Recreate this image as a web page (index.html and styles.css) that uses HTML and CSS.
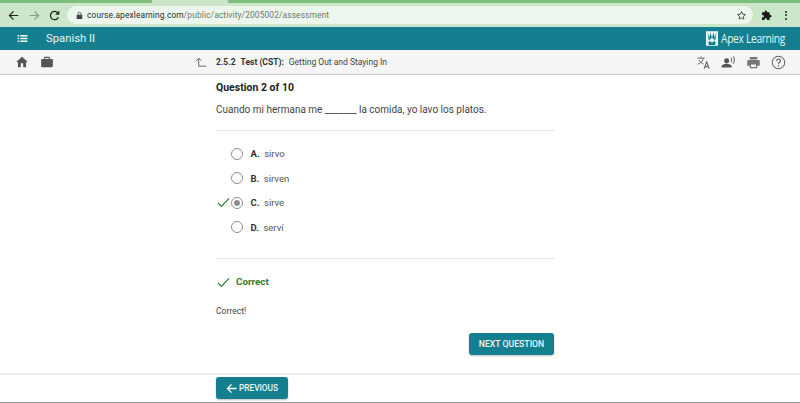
FILE: index.html
```html
<!DOCTYPE html>
<html lang="es">
<head>
<meta charset="utf-8">
<title>Spanish II</title>
<link rel="stylesheet" href="styles.css">
</head>
<body>
<div class="page">
  <div class="tabstrip"><div class="tab"></div></div>
  <div class="toolbar">
    <svg class="ico nav-back" viewBox="0 0 16 16"><path d="M15 8H2M8 2 2 8l6 6" fill="none" stroke="#222" stroke-width="1.800"/></svg>
    <svg class="ico nav-fwd" viewBox="0 0 16 16"><path d="M1 8h13M8 2l6 6-6 6" fill="none" stroke="#8a9c89" stroke-width="1.800"/></svg>
    <svg class="ico nav-reload" viewBox="0 0 16 16"><path d="M13.600 10.500A6 6 0 1 1 13 4.700" fill="none" stroke="#222" stroke-width="1.800"/><path d="M15 1v6H9z" fill="#222"/></svg>
    <div class="urlbar">
      <svg class="lock" viewBox="0 0 10 12"><path d="M1 5h8v6H1z" fill="#444"/><path d="M3 5V3.400a2 2 0 0 1 4 0V5" fill="none" stroke="#444" stroke-width="1.200"/></svg>
      <span class="url"><span class="url-host">course.apexlearning.com</span>/public/activity/2005002/assessment</span>
      <svg class="star" viewBox="0 0 24 24"><path d="m12 3.500 2.600 5.600 6 .7-4.500 4.100 1.200 6-5.300-3-5.300 3 1.200-6-4.500-4.100 6-.7z" fill="none" stroke="#333" stroke-width="1.800"/></svg>
    </div>
    <svg class="puzzle" viewBox="0 0 24 24"><path d="M20.500 11H19V7a2 2 0 0 0-2-2h-4V3.500a2.500 2.500 0 0 0-5 0V5H4a2 2 0 0 0-2 2v3.800h1.500a2.700 2.700 0 0 1 0 5.400H2V20a2 2 0 0 0 2 2h3.800v-1.500a2.700 2.700 0 0 1 5.400 0V22H17a2 2 0 0 0 2-2v-4h1.500a2.500 2.500 0 0 0 0-5z" fill="#1b1b1b"/></svg>
    <div class="kebab"><i></i><i></i><i></i></div>
  </div>
  <header class="appbar">
    <svg class="menu-ico" viewBox="0 0 24 24"><path d="M3 5.500h3v3H3zM3 10.500h3v3H3zM3 15.500h3v3H3zM8 5.500h13v3H8zM8 10.500h13v3H8zM8 15.500h13v3H8z" fill="#fff"/></svg>
    <span class="course">Spanish II</span>
    <div class="brand">
      <svg class="brand-mark" viewBox="0 0 14 17"><path d="M0 0h14v17H0z" fill="#e9f4f5"/><path d="M2 1.500l2 6 1.200-6 1.800 6 1.800-6L10 7.500l2-6-1 8.500H9.500L7 7 4.500 10H3zM3.500 16a3.800 3.800 0 0 1 .9-5l1.300 1.500a2 2 0 0 0 2.600 0l1.300-1.500a3.800 3.800 0 0 1 .9 5z" fill="#14808f"/></svg>
      <span class="brand-name">Apex Learning</span>
    </div>
  </header>
  <nav class="subbar">
    <div class="sub-left">
      <svg class="tool" viewBox="0 0 24 24"><path d="M10 21v-7h4v7h5v-9h3L12 3 2 12h3v9z" fill="#555"/></svg>
      <svg class="tool" viewBox="0 0 24 24"><path d="M9 3h6a2 2 0 0 1 2 2v2h4a1 1 0 0 1 1 1v11a2 2 0 0 1-2 2H4a2 2 0 0 1-2-2V8a1 1 0 0 1 1-1h4V5a2 2 0 0 1 2-2zm0 4h6V5H9z" fill="#555" fill-rule="evenodd"/></svg>
    </div>
    <div class="crumb">
      <svg class="up-ico" viewBox="0 0 16 16"><path d="M5 14V3M1.500 6.500 5 3l3.500 3.500M5 13.500h10" fill="none" stroke="#666" stroke-width="1.300"/></svg>
      <span class="crumb-text"><b>2.5.2</b><b class="crumb-type">Test (CST):</b>Getting Out and Staying In</span>
    </div>
    <div class="sub-right">
      <svg class="tool" viewBox="0 0 24 24"><path d="M2 5h12M8 2.500V5M12 5c-1 4-4.500 8-9.500 10M5 8c1.500 3 4 5.500 7 6.500" fill="none" stroke="#666" stroke-width="1.500"/><path d="m13 22 4-11 4 11M14.300 18.500h5.400" fill="none" stroke="#666" stroke-width="1.800"/></svg>
      <svg class="tool" viewBox="0 0 24 24"><circle cx="9" cy="9" r="4" fill="#555"/><path d="M1 20v-2c0-2.500 5-4 8-4s8 1.500 8 4v2z" fill="#555"/><path d="M16 4c1.500 1.500 1.500 6 0 8M19.500 2c2.500 3 2.500 9 0 12" fill="none" stroke="#555" stroke-width="1.500"/></svg>
      <svg class="tool" viewBox="0 0 24 24"><path d="M6 3h12v4H6zM4 8h16a2 2 0 0 1 2 2v7h-4v4H6v-4H2v-7a2 2 0 0 1 2-2zm4 7v4h8v-4z" fill="#777" fill-rule="evenodd"/></svg>
      <svg class="tool" viewBox="0 0 24 24"><circle cx="12" cy="12" r="10" fill="none" stroke="#555" stroke-width="1.600"/><path d="M9 9.500a3 3 0 1 1 4.700 2.500c-1.200.8-1.700 1.400-1.700 2.800" fill="none" stroke="#555" stroke-width="1.700"/><circle cx="12" cy="17.500" r="1.100" fill="#555"/></svg>
    </div>
  </nav>
  <main class="content">
    <h1 class="q-title">Question 2 of 10</h1>
    <p class="q-text">Cuando mi hermana me _______ la comida, yo lavo los platos.</p>
    <hr class="rule rule-top">
    <ul class="options">
      <li class="option"><span class="mark"></span><span class="radio"></span><b class="letter">A.</b><span>sirvo</span></li>
      <li class="option"><span class="mark"></span><span class="radio"></span><b class="letter">B.</b><span>sirven</span></li>
      <li class="option"><span class="mark"><svg class="check" viewBox="0 0 14 12"><path d="m1 6.500 3.800 3.800L13 1.500" fill="none" stroke="#2e7d32" stroke-width="1.300"/></svg></span><span class="radio radio-on"></span><b class="letter">C.</b><span>sirve</span></li>
      <li class="option"><span class="mark"></span><span class="radio"></span><b class="letter">D.</b><span>serví</span></li>
    </ul>
    <hr class="rule rule-bottom">
    <div class="verdict"><svg class="check" viewBox="0 0 14 12"><path d="m1 6.500 3.800 3.800L13 1.500" fill="none" stroke="#2e7d32" stroke-width="1.300"/></svg><span>Correct</span></div>
    <p class="feedback">Correct!</p>
    <div class="next-row"><button class="btn btn-next" type="button">NEXT QUESTION</button></div>
  </main>
  <footer class="footer">
    <button class="btn btn-prev" type="button"><svg class="prev-arrow" viewBox="0 0 12 12"><path d="M11.500 6H1.500M6 1.500 1.500 6 6 10.500" fill="none" stroke="#fff" stroke-width="1.400"/></svg>PREVIOUS</button>
  </footer>
</div>
</body>
</html>
```
FILE: styles.css
```css
* { box-sizing: border-box; }
html, body { margin: 0; padding: 0; background: #fff; }
body { font-family: Roboto, "Liberation Sans", sans-serif; color: #333; overflow: hidden; }
.page { width: 800px; height: 403px; display: flex; flex-direction: column; }

.tabstrip { height: 3px; background: #7fbf7e; padding-left: 152px; flex: none; }
.tab { width: 76px; height: 3px; background: #cbe6c8; }
.toolbar { height: 24px; background: #cbe6c8; display: flex; align-items: center; flex: none; }
.ico { width: 11px; height: 11px; flex: none; }
.nav-back { margin-left: 8px; }
.nav-fwd { margin-left: 10px; }
.nav-reload { margin-left: 9px; }
.urlbar { margin-left: 7px; width: 686px; height: 18px; border-radius: 9px; background: #edf6ec; display: flex; align-items: center; padding-left: 9px; padding-right: 6px; }
.lock { width: 7px; height: 9px; flex: none; }
.url { margin-left: 4px; font-size: 8.400px; color: #6d766d; letter-spacing: .12px; flex: 1; white-space: nowrap; }
.url-host { color: #2c2f2c; }
.star { width: 11px; height: 11px; flex: none; }
.puzzle { width: 11px; height: 11px; margin-left: 8px; flex: none; }
.kebab { margin-left: 13px; display: flex; flex-direction: column; gap: 1.500px; flex: none; }
.kebab i { display: block; width: 2px; height: 2px; background: #222; border-radius: 50%; }

.appbar { height: 23px; background: #14808f; display: flex; align-items: center; color: #fff; flex: none; padding-left: 16px; padding-right: 15px; }
.menu-ico { width: 13px; height: 13px; flex: none; }
.course { margin-left: 17px; font-size: 11.300px; color: #e6f3f4; }
.brand { margin-left: auto; display: flex; align-items: center; gap: 3px; }
.brand-mark { width: 12px; height: 15px; }
.brand-name { font-family: "Open Sans", sans-serif; font-size: 12px; letter-spacing: -.35px; transform: scaleX(.85); transform-origin: left; width: 64px; white-space: nowrap; color: #e6f3f4; }

.subbar { height: 25px; background: #f5f5f5; border-bottom: 1px solid #c9c9c9; display: flex; align-items: center; flex: none; padding-left: 15px; padding-right: 14px; }
.sub-left { display: flex; align-items: center; gap: 11px; width: 180px; }
.sub-left .tool { width: 14px; height: 14px; }
.crumb { display: flex; align-items: center; }
.up-ico { width: 12px; height: 12px; }
.crumb-text { margin-left: 9px; font-size: 8.500px; color: #444; white-space: nowrap; }
.crumb-text b { color: #333; font-weight: 700; }
.crumb-type { margin: 0 5px; }
.sub-right { margin-left: auto; display: flex; align-items: center; gap: 10px; }
.sub-right .tool { width: 15px; height: 15px; }

.content { width: 338px; margin-left: 216px; flex: 1; min-height: 0; padding-top: 6px; }
.q-title { margin: 0; font-size: 10.400px; line-height: 13px; font-weight: 700; color: #222; letter-spacing: .05px; }
.q-text { margin: 9px 0 0; font-size: 10px; line-height: 14px; color: #444; }
.rule { border: 0; height: 1px; background: #e5e5e5; margin: 0; }
.rule-top { margin-top: 13px; }
.options { list-style: none; margin: 10.500px 0 0; padding: 0; }
.option { height: 24.500px; display: flex; align-items: center; font-size: 9.500px; color: #555; }
.mark { width: 15px; display: flex; align-items: center; flex: none; }
.mark .check { margin-left: 1px; }
.radio { width: 12px; height: 12px; border: 1px solid #8f8f8f; border-radius: 50%; background: #fff; flex: none; }
.radio-on { display: flex; align-items: center; justify-content: center; }
.radio-on::after { content: ""; width: 6px; height: 6px; border-radius: 50%; background: #8f8f8f; }
.letter { margin-left: 7.500px; margin-right: 4.500px; color: #333; }
.rule-bottom { margin-top: 18.500px; }
.check { width: 13px; height: 11px; flex: none; }
.verdict { margin-top: 17px; display: flex; align-items: center; gap: 6px; font-size: 9.800px; font-weight: 700; color: #2e7d32; line-height: 12px; padding-left: 1px; }
.feedback { margin: 18px 0 0; font-size: 8.600px; line-height: 11px; color: #444; }
.next-row { display: flex; justify-content: flex-end; margin-top: 16px; }
.btn { border: 0; background: #14808f; color: #eef6f7; font-family: Roboto, "Liberation Sans", sans-serif; font-weight: 500; border-radius: 3px; box-shadow: 0 1px 2px rgba(0,0,0,.25); padding: 0; }
.btn-next { width: 85px; height: 21.500px; font-size: 8.700px; }

.footer { height: 30px; flex: none; border-top: 2px solid #eee; border-bottom: 1px solid #999; padding-left: 216px; padding-top: 2px; display: flex; align-items: flex-start; }
.btn-prev { width: 72px; height: 22px; font-size: 8.300px; display: flex; align-items: center; justify-content: center; gap: 2px; }
.prev-arrow { width: 11px; height: 11px; }
```
